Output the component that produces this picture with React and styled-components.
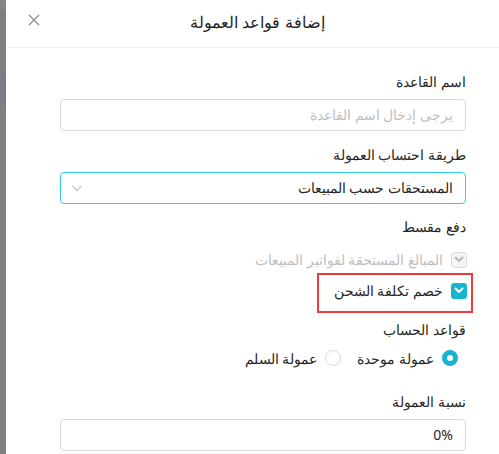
import React from "react";
import styled, { createGlobalStyle } from "styled-components";

const Global = createGlobalStyle`
  html, body { margin: 0; padding: 0; }
  body {
    width: 499px;
    height: 454px;
    overflow: hidden;
    background: #fff;
    font-family: "Noto Sans", sans-serif;
    font-size: 14px;
    color: #262626;
  }
  #root { height: 454px; }
`;

const Page = styled.div`
  display: flex;
  height: 454px;
`;

const Mask = styled.div`
  width: 6px;
  flex: none;
  background: linear-gradient(
    to bottom,
    #858585 0px, #858585 12px,
    #7a7a7a 12px, #7a7a7a 13px,
    #7f7f7f 13px, #7f7f7f 73px,
    #7b7e86 73px, #7b7e86 108px,
    #7f7f7f 108px, #7f7f7f 454px
  );
`;

const Drawer = styled.div`
  flex: 1;
  display: flex;
  flex-direction: column;
  background: #fff;
  min-width: 0;
  overflow: hidden;
`;

const Header = styled.div`
  flex: none;
  height: 48px;
  box-sizing: border-box;
  border-bottom: 1px solid #f0f0f0;
  display: flex;
  align-items: center;
  padding: 0 36px 0 22px;
`;

const CloseButton = styled.button`
  width: 12px;
  height: 12px;
  padding: 0;
  margin: -8px 12px 0 0;
  border: 0;
  background: none;
  display: flex;
  color: #8c8c8c;
  cursor: pointer;
`;

const Title = styled.div`
  flex: 1;
  text-align: center;
  font-size: 16px;
  line-height: 24px;
  margin-top: -3px;
  color: #262626;
  direction: rtl;
`;

const Body = styled.div`
  flex: none;
  direction: rtl;
  padding: 23px 33px 0 54px;
`;

const Item = styled.div`
  margin-bottom: ${(p) => p.$mb ?? 13}px;
`;

const Label = styled.div`
  line-height: 22px;
  padding-bottom: 6px;
  color: #262626;
`;

const Field = styled.div`
  height: 32px;
  box-sizing: border-box;
  border: 1px solid ${(p) => (p.$focused ? "#2fcfe2" : "#d9d9d9")};
  border-radius: 4px;
  display: flex;
  align-items: center;
  padding: 0 12px;
  color: ${(p) => (p.$placeholder ? "#bfbfbf" : "#262626")};
  line-height: 22px;
`;

const FieldText = styled.span`
  flex: 1;
`;

const Chevron = styled.svg`
  width: 10px;
  height: 7px;
  flex: none;
  margin-left: -1px;
`;

const CheckGroup = styled.div`
  display: flex;
  flex-direction: column;
`;

const CheckRow = styled.label`
  position: relative;
  height: 31px;
  display: flex;
  align-items: center;
  gap: 8px;
  margin-right: -1px;
  color: ${(p) => (p.$disabled ? "#bfbfbf" : "#262626")};
`;

const Box = styled.span`
  width: 16px;
  height: 16px;
  box-sizing: border-box;
  border-radius: 3px;
  flex: none;
  display: flex;
  align-items: center;
  justify-content: center;
  background: ${(p) => (p.$disabled ? "#f5f5f5" : "#18b3d2")};
  border: 1px solid ${(p) => (p.$disabled ? "#d9d9d9" : "#18b3d2")};
`;

const Highlight = styled.span`
  position: absolute;
  right: -6px;
  top: -2px;
  bottom: -7px;
  width: 156px;
  box-sizing: border-box;
  border: 2px solid #f03a3a;
  pointer-events: none;
`;

const RadioGroup = styled.div`
  display: flex;
  align-items: center;
  height: 22px;
  padding-right: 8px;
  gap: 16px;
`;

const RadioOption = styled.label`
  display: flex;
  align-items: center;
  gap: 8px;
`;

const RadioDot = styled.span`
  width: 16px;
  height: 16px;
  box-sizing: border-box;
  border-radius: 50%;
  flex: none;
  background: #fff;
  border: ${(p) => (p.$checked ? "5px solid #18b3d2" : "1px solid #d9d9d9")};
`;

const Tick = ({ color }) => (
  <svg width="10" height="7" viewBox="0 0 10 7">
    <polyline points="1.5,1.5 5,5 8.5,1.5" fill="none" stroke={color} strokeWidth="2" strokeLinecap="round" strokeLinejoin="round" />
  </svg>
);

export default function App() {
  return (
    <>
      <Global />
      <Page>
        <Mask />
        <Drawer>
          <Header>
            <CloseButton aria-label="close">
              <svg width="12" height="12" viewBox="0 0 12 12">
                <path d="M1 1L11 11M11 1L1 11" stroke="#8c8c8c" strokeWidth="1.3" />
              </svg>
            </CloseButton>
            <Title>إضافة قواعد العمولة</Title>
          </Header>
          <Body>
            <Item>
              <Label>اسم القاعدة</Label>
              <Field $placeholder>
                <FieldText>يرجى إدخال اسم القاعدة</FieldText>
              </Field>
            </Item>
            <Item $mb={12}>
              <Label>طريقة احتساب العمولة</Label>
              <Field $focused>
                <FieldText>المستحقات حسب المبيعات</FieldText>
                <Chevron viewBox="0 0 10 7">
                  <polyline points="0.5,0.8 5,5.5 9.5,0.8" fill="none" stroke="#bfbfbf" strokeWidth="1.1" />
                </Chevron>
              </Field>
            </Item>
            <Item>
              <Label>دفع مقسط</Label>
              <CheckGroup>
                <CheckRow $disabled>
                  <Box $disabled>
                    <Tick color="#b8b8b8" />
                  </Box>
                  المبالغ المستحقة لفواتير المبيعات
                </CheckRow>
                <CheckRow>
                  <Box>
                    <Tick color="#fff" />
                  </Box>
                  خصم تكلفة الشحن
                  <Highlight />
                </CheckRow>
              </CheckGroup>
            </Item>
            <Item $mb={22}>
              <Label>قواعد الحساب</Label>
              <RadioGroup>
                <RadioOption>
                  <RadioDot $checked />
                  عمولة موحدة
                </RadioOption>
                <RadioOption>
                  <RadioDot />
                  عمولة السلم
                </RadioOption>
              </RadioGroup>
            </Item>
            <Item>
              <Label>نسبة العمولة</Label>
              <Field>
                <FieldText>0%</FieldText>
              </Field>
            </Item>
          </Body>
        </Drawer>
      </Page>
    </>
  );
}
